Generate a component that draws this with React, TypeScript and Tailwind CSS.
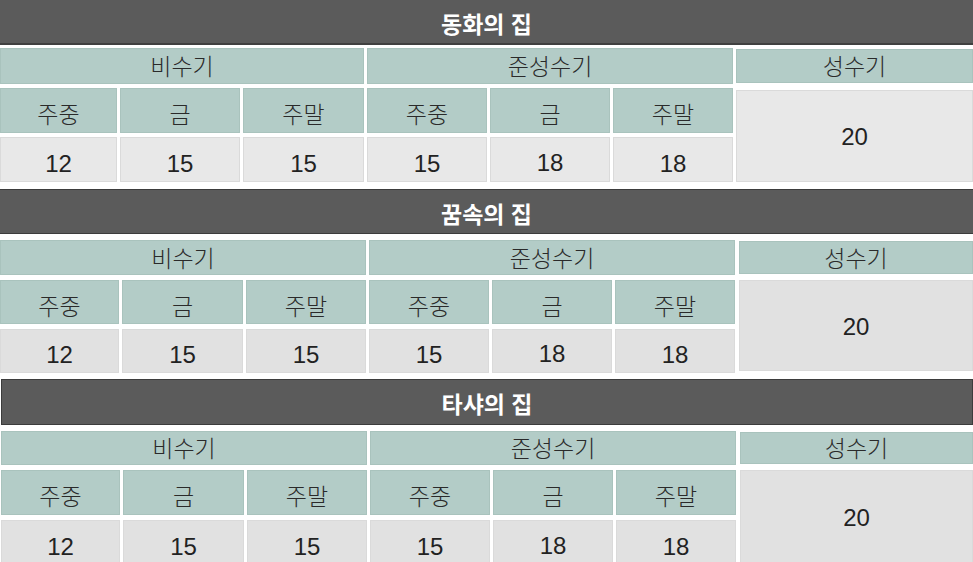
import React from "react";

const FONT = { fontFamily: '"Liberation Sans", "Noto Sans CJK KR", sans-serif' };

type BlockProps = {
  title: string;
  gridClass: string;
  grayClass: string;
  headerClass: string;
  wrapClass: string;
  rowsWrapClass: string;
  seongClass: string;
  twentyClass: string;
};

function Teal({ children, className = "" }: { children: React.ReactNode; className?: string }) {
  return (
    <div
      className={
        "flex items-center justify-center bg-[#b3ccc7] border border-[#a9c3bd] text-[23px] font-light leading-none text-[#2a2a2a] " +
        className
      }
    >
      {children}
    </div>
  );
}

function Gray({ children, className = "" }: { children: React.ReactNode; className?: string }) {
  return (
    <div
      className={
        "flex items-center justify-center border border-[#dadada] text-[24px] leading-none text-[#222] " +
        className
      }
    >
      {children}
    </div>
  );
}

function Block(p: BlockProps) {
  return (
    <div className={p.wrapClass}>
      <div
        className={
          "flex items-center justify-center bg-[#5b5b5b] text-white font-bold text-[23px] leading-none pt-[7px] " +
          p.headerClass
        }
      >
        {p.title}
      </div>
      <div className={"grid gap-x-[3px] " + p.gridClass + " " + p.rowsWrapClass}>
        <Teal className="col-span-3 pt-[3px]">비수기</Teal>
        <Teal className="col-span-3 pt-[3px]">준성수기</Teal>
        <Teal className={"pt-[3px] " + p.seongClass}>성수기</Teal>
        <Teal className="pt-[10px]">주중</Teal>
        <Teal className="pt-[10px]">금</Teal>
        <Teal className="pt-[10px]">주말</Teal>
        <Teal className="pt-[10px]">주중</Teal>
        <Teal className="pt-[10px]">금</Teal>
        <Teal className="pt-[10px]">주말</Teal>
        <Gray className={"row-span-2 pt-[2px] " + p.grayClass + " " + p.twentyClass}>20</Gray>
        <Gray className={"pt-[8px] " + p.grayClass}>12</Gray>
        <Gray className={"pt-[8px] " + p.grayClass}>15</Gray>
        <Gray className={"pt-[8px] " + p.grayClass}>15</Gray>
        <Gray className={"pt-[8px] " + p.grayClass}>15</Gray>
        <Gray className={"pt-[6px] " + p.grayClass}>18</Gray>
        <Gray className={"pt-[8px] " + p.grayClass}>18</Gray>
      </div>
    </div>
  );
}

export default function App() {
  return (
    <div className="w-[973px] h-[562px] overflow-hidden bg-white" style={FONT}>
      <Block
        title="동화의 집"
        wrapClass=""
        headerClass="h-[45px] border-b-2 border-[#404040]"
        gridClass="grid-cols-[117px_120px_121px_120px_120px_120px_1fr]"
        rowsWrapClass="mt-[3px] grid-rows-[36px_45px_45px] gap-y-[4px]"
        grayClass="bg-[#e8e8e8]"
        seongClass="my-[1px]"
        twentyClass="mt-[2px]"
      />
      <Block
        title="꿈속의 집"
        wrapClass="mt-[7px]"
        headerClass="h-[45px] border-y border-[#3c3c3c]"
        gridClass="grid-cols-[119px_121px_120px_120px_120px_120px_1fr]"
        rowsWrapClass="mt-[6px] grid-rows-[35px_44px_44px] gap-y-[5px]"
        grayClass="bg-[#e1e1e1]"
        seongClass="my-[1px] ml-[1px]"
        twentyClass="mb-[2px] ml-[1px]"
      />
      <Block
        title="타샤의 집"
        wrapClass="mt-[6px] pl-[1px]"
        headerClass="h-[46px] border border-[#3c3c3c]"
        gridClass="grid-cols-[119px_121px_120px_120px_120px_120px_1fr]"
        rowsWrapClass="mt-[6px] grid-rows-[34px_45px_45px] gap-y-[5px]"
        grayClass="bg-[#e1e1e1]"
        seongClass="my-[1px] ml-[1px]"
        twentyClass="mb-[2px] ml-[1px]"
      />
    </div>
  );
}
